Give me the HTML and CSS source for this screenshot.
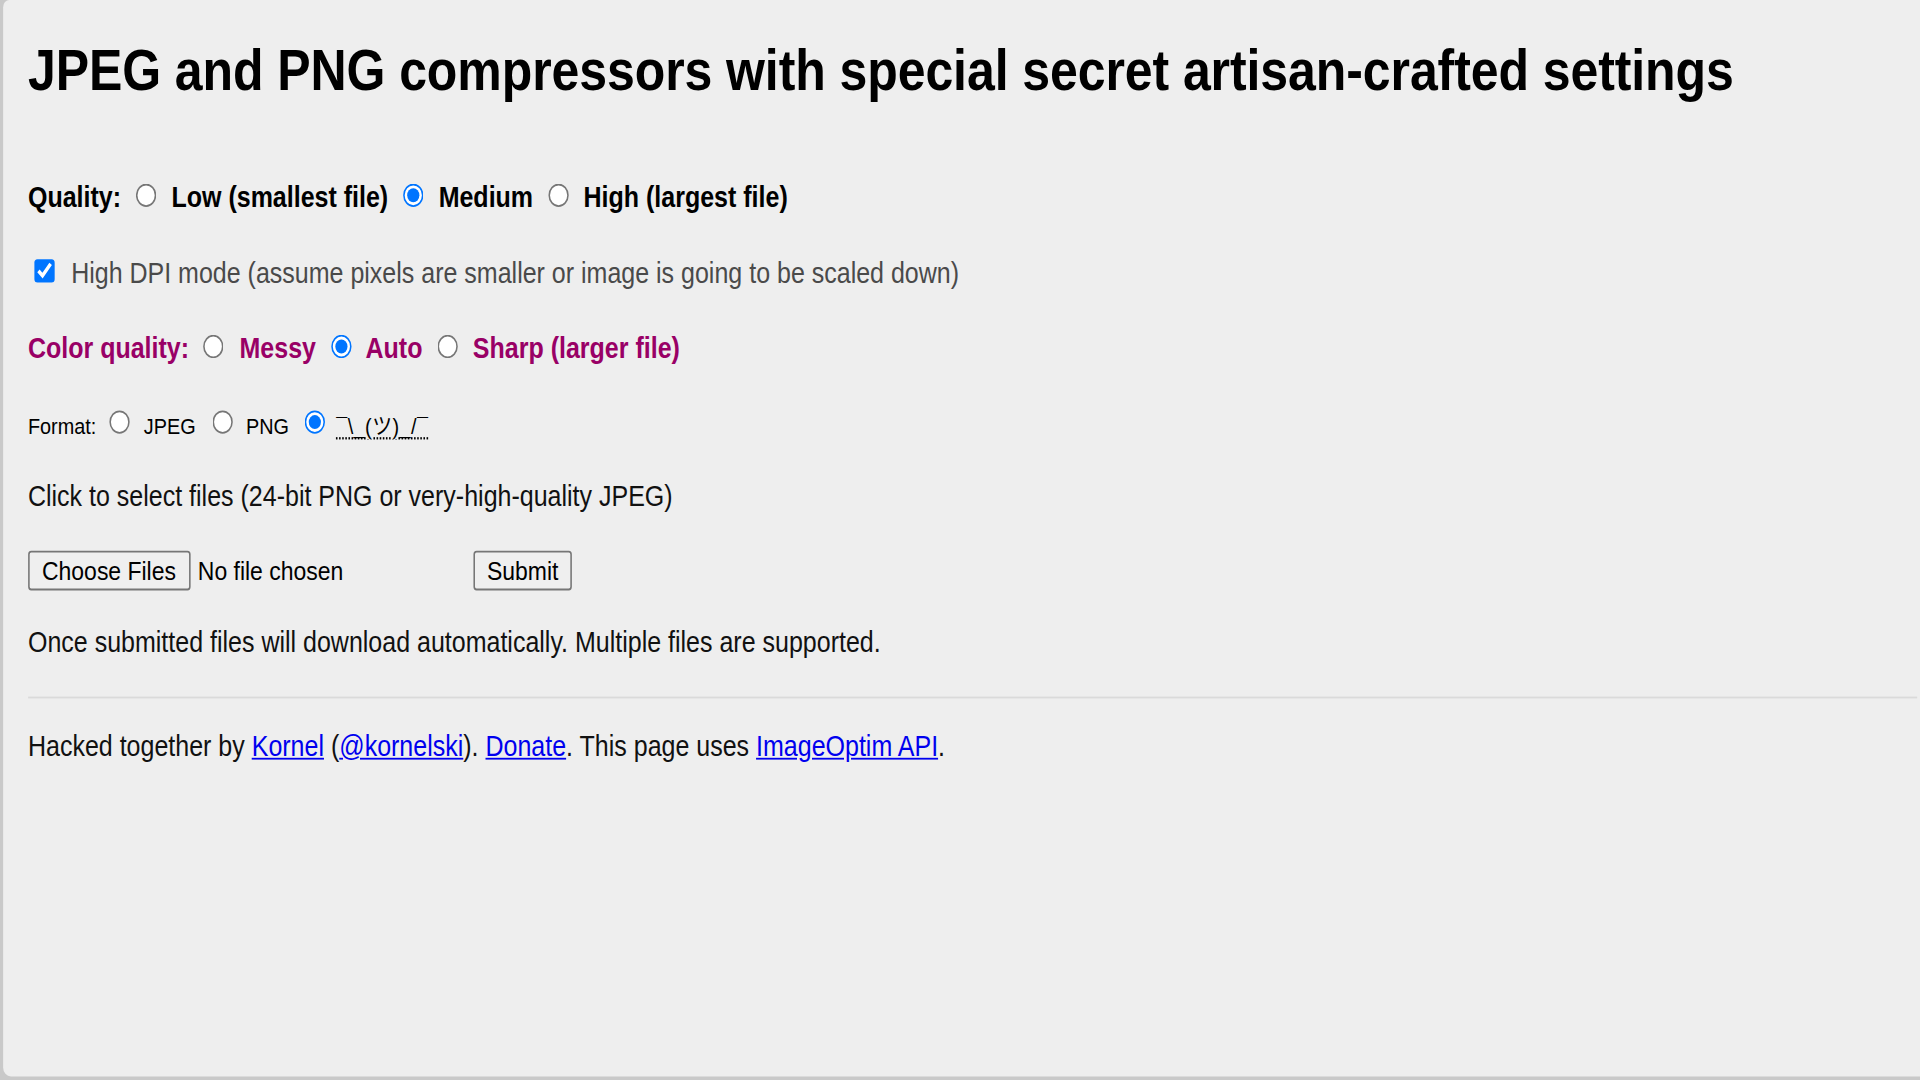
FILE: index.html
```html
<!DOCTYPE html>
<html lang="en">
<head>
<meta charset="utf-8">
<title>JPEG and PNG compressors</title>
<link rel="stylesheet" href="styles.css">
</head>
<body>
<div class="page">
  <main class="panel">
    <h1 class="title">JPEG and PNG compressors with special secret artisan-crafted settings</h1>
    <p class="row row-quality">Quality: <label><input type="radio" name="quality"> Low (smallest file)</label> <label><input type="radio" name="quality" checked> Medium</label> <label><input type="radio" name="quality"> High (largest file)</label></p>
    <p class="row row-dpi"><label><input type="checkbox" checked> High DPI mode (assume pixels are smaller or image is going to be scaled down)</label></p>
    <p class="row row-color">Color quality: <label><input type="radio" name="color"> Messy</label> <label><input type="radio" name="color" checked> Auto</label> <label><input type="radio" name="color"> Sharp (larger file)</label></p>
    <p class="row row-format">Format: <label><input type="radio" name="format"> JPEG</label> <label><input type="radio" name="format"> PNG</label> <label><input type="radio" name="format" checked> <abbr class="shrug" title="Auto">&#175;\_(&#12484;)_/&#175;</abbr></label></p>
    <p class="row row-click">Click to select files (24-bit PNG or very-high-quality JPEG)</p>
    <div class="row row-files">
      <div class="file">
        <label class="btn">Choose Files<input type="file" multiple hidden></label>
        <span class="nofile">No file chosen</span>
      </div>
      <button class="btn submit" type="button">Submit</button>
    </div>
    <p class="row row-once">Once submitted files will download automatically. Multiple files are supported.</p>
    <hr class="rule">
    <p class="row row-credit">Hacked together by <a href="#">Kornel</a> (<a href="#">@kornelski</a>). <a href="#">Donate</a>. This page uses <a href="#">ImageOptim API</a>.</p>
  </main>
</div>
</body>
</html>
```
FILE: styles.css
```css
html {
  background: #c9c9c9;
}

body {
  margin: 0;
  height: 1080px;
  font-family: "Liberation Sans", Arial, sans-serif;
  color: #111;
}

.page {
  width: 1228.8px;
  height: 600px;
  transform: scale(1.5625, 1.8);
  transform-origin: 0 0;
}

.panel {
  box-sizing: border-box;
  height: 597.8px;
  margin-left: 1.9px;
  background: #eee;
  border-radius: 4px 0 0 5px;
  padding: 0 1.4px 0 16px;
  display: flex;
  flex-direction: column;
}

.title {
  margin: 20.7px 0 0;
  height: 37px;
  font-size: 32px;
  line-height: 37px;
  font-weight: bold;
  letter-spacing: -0.055px;
  color: #000;
  white-space: nowrap;
}

.row {
  margin: 0;
  height: 20px;
  line-height: 20px;
  font-size: 16px;
  white-space: nowrap;
}

.row input[type="radio"] {
  margin: 3px 5.4px 0 5px;
}

.row-format label + label {
  margin-left: 1.8px;
}

.row input[type="checkbox"] {
  margin: 3px 6.2px 3px 4px;
}

.row-quality {
  margin-top: 41.5px;
  font-weight: bold;
  color: #000;
}

.row-dpi {
  margin-top: 21.8px;
  color: #4a4a4a;
}

.row-color {
  margin-top: 22.2px;
  font-weight: bold;
  color: #906;
}

.row-format {
  margin-top: 22.2px;
  font-size: 12.7px;
  color: #000;
}

.shrug {
  margin-left: -2px;
  letter-spacing: 0.3px;
  font-family: "Liberation Sans", "Noto Sans CJK JP", sans-serif;
  text-decoration: underline dotted;
  text-underline-offset: 2px;
}

.row-click {
  margin-top: 20.8px;
}

.row-files {
  margin-top: 19.4px;
  height: 22.6px;
  display: flex;
  align-items: center;
}

.file {
  display: flex;
  align-items: center;
  width: 280.8px;
}

.btn {
  box-sizing: border-box;
  display: inline-flex;
  align-items: center;
  height: 22.6px;
  margin: 0;
  padding: 0 8px;
  border: 1px solid #767676;
  border-radius: 2px;
  background: #efefef;
  font-family: "Liberation Sans", Arial, sans-serif;
  font-size: 14.7px;
  color: #000;
}

.nofile {
  margin-left: 5px;
  font-size: 14.7px;
  color: #000;
}

.submit {
  margin-left: 4px;
}

.row-once {
  margin-top: 19px;
}

.rule {
  margin: 19.4px 0 0;
  border: 0;
  border-top: 1px solid #dadada;
  height: 0;
}

.row-credit {
  margin-top: 17.4px;
}

a {
  color: #00e;
}
```
